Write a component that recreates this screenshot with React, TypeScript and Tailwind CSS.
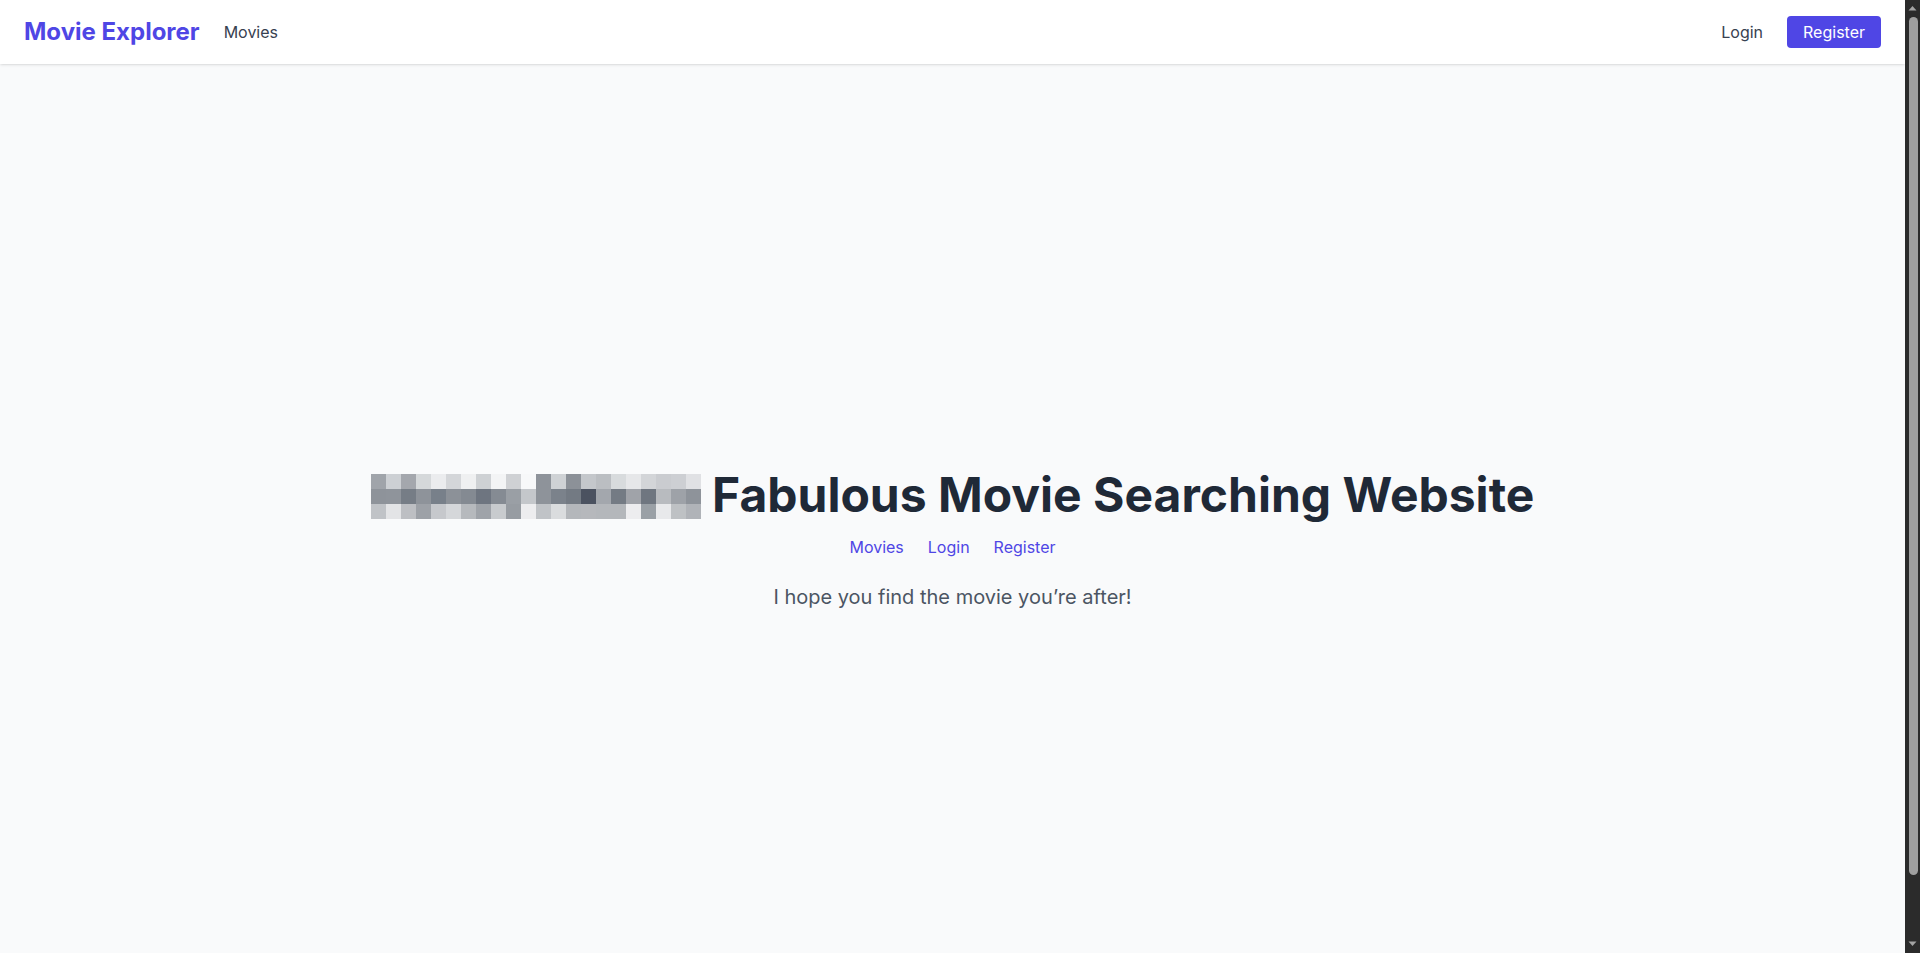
import React from "react";

const ROWS: string[][] = [
  ["#a0a4aa", "#cdd0d4", "#a4a7ad", "#d5d8da", "#ebecee", "#d4d6d9", "#eff0f1", "#ced1d4", "#f3f4f5", "#cfd1d4", "#f7f8f9",
   "#8e939a", "#cfd2d5", "#8c9198", "#c4c7cb", "#bbbec2", "#d8dbdd", "#e6e7e9", "#d3d5d8", "#caccd0", "#cdcfd3", "#e0e1e4"],
  ["#8e939a", "#8f949b", "#767d86", "#8e939a", "#78808a", "#8c9198", "#848a92", "#6e7580", "#858b93", "#9a9fa5", "#c4c7cb",
   "#8e939a", "#7b828b", "#737a83", "#4b5260", "#a3a7ad", "#747b84", "#a0a3a9", "#6f7680", "#b8bbbf", "#9ea2a8", "#8e939a"],
  ["#c0c3c7", "#e3e4e6", "#bdbfc3", "#9da1a7", "#c6c8cc", "#d5d7da", "#b6b9bd", "#9fa3a9", "#c8cbce", "#979ca2", "#ededef",
   "#c0c3c7", "#dadcde", "#b4b7bb", "#b6b8bc", "#b4b7bb", "#b4b7bb", "#ededef", "#9aa0a6", "#e8e9eb", "#bec1c4", "#b0b3b8"],
];

function Redacted() {
  return (
    <svg width="330" height="45" viewBox="0 0 330 45" className="inline-block align-[-7px]" aria-hidden="true">
      {ROWS.map((row, r) =>
        row.map((c, i) => (
          <rect key={`${r}-${i}`} x={i * 15} y={r * 15} width="15" height="15" fill={c} />
        ))
      )}
    </svg>
  );
}

function Scrollbar() {
  return (
    <div className="w-[15px] shrink-0 h-screen bg-[#2b2b2b] flex flex-col items-center">
      <svg width="15" height="17" viewBox="0 0 15 17" className="shrink-0" aria-hidden="true">
        <polygon points="3.5,10.5 11.5,10.5 7.5,6" fill="#a3a3a3" />
      </svg>
      <div className="w-[9px] ml-[1px] h-[858px] rounded-full bg-[#9f9f9f]" />
      <div className="flex-1" />
      <svg width="15" height="17" viewBox="0 0 15 17" className="shrink-0" aria-hidden="true">
        <polygon points="3.5,5.5 11.5,5.5 7.5,10" fill="#a3a3a3" />
      </svg>
    </div>
  );
}

export default function App() {
  return (
    <div className="h-screen overflow-hidden flex bg-[#f9fafb]" style={{ fontFamily: "Inter, 'Noto Sans', sans-serif" }}>
      <div className="flex-1 min-w-0 h-screen overflow-hidden">
        <nav className="h-16 bg-white shadow-sm flex items-center justify-between px-6 relative">
          <div className="flex items-center gap-6">
            <span className="text-2xl font-bold text-[#4f46e5]">Movie Explorer</span>
            <a className="text-base text-[#374151]">Movies</a>
          </div>
          <div className="flex items-center gap-6">
            <a className="text-base text-[#374151]">Login</a>
            <a className="text-base text-white bg-[#4f46e5] rounded px-4 py-1">Register</a>
          </div>
        </nav>
        <main className="min-h-screen flex flex-col items-center justify-center text-center">
          <h1 className="text-5xl leading-[48px] font-bold text-[#1f2937] mb-4 whitespace-nowrap">
            <Redacted /> Fabulous Movie Searching Website
          </h1>
          <div className="flex items-center gap-6 text-base text-[#4f46e5]">
            <a>Movies</a>
            <a>Login</a>
            <a>Register</a>
          </div>
          <p className="mt-6 text-xl text-[#4b5563]">I hope you find the movie you’re after!</p>
        </main>
      </div>
      <Scrollbar />
    </div>
  );
}
